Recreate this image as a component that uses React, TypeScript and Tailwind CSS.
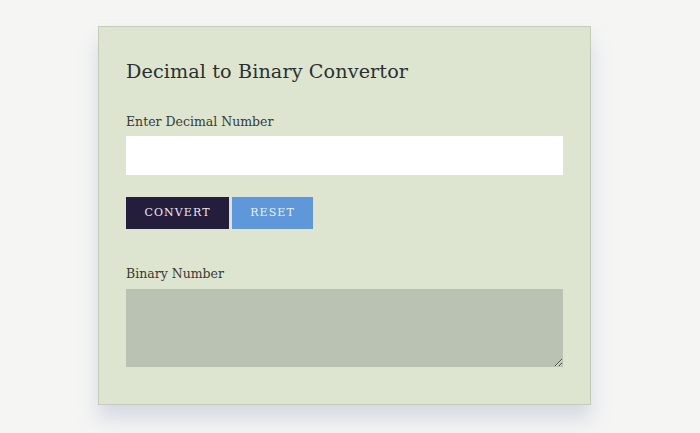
import { useState } from "react";

const serif = { fontFamily: '"DejaVu Serif", "Liberation Serif", serif' };

const App = () => {
  const [decimal, setDecimal] = useState("");
  const [binary, setBinary] = useState("");

  const handleConvert = () => {
    const n = parseInt(decimal, 10);
    setBinary(isNaN(n) ? "" : n.toString(2));
  };

  const handleReset = () => {
    setDecimal("");
    setBinary("");
  };

  return (
    <div className="min-h-[433px] w-full bg-[#f5f5f4] pt-[26px] pl-[98px]" style={serif}>
      <div className="w-[493px] border border-[#c4cbb9] bg-[#dde5d0] px-[27px] pt-[30px] pb-[37px] shadow-[0_14px_18px_rgba(200,206,220,0.7)]">
        <h1 className="text-[19.2px] leading-[30px] text-[#2a302f] tracking-[0.1px]">
          Decimal to Binary Convertor
        </h1>

        <label className="mt-[26px] block text-[12.5px] leading-[18px] text-[#363b36]">
          Enter Decimal Number
        </label>
        <input
          value={decimal}
          onChange={(e) => setDecimal(e.target.value)}
          className="mt-[5px] block h-[39px] w-full bg-white px-3 text-[14px] outline-none"
        />

        <div className="mt-[22px] flex gap-[3px]">
          <button
            onClick={handleConvert}
            className="h-[32px] w-[103px] bg-[#241d3b] pt-px text-[11px] uppercase tracking-[1.1px] text-[#ece9f2]"
          >
            Convert
          </button>
          <button
            onClick={handleReset}
            className="h-[32px] w-[81px] bg-[#5f98da] pt-px text-[11px] uppercase tracking-[1.1px] text-[#e9f0f9]"
          >
            Reset
          </button>
        </div>

        <label className="mt-[36px] block text-[12.5px] leading-[18px] text-[#363b36]">
          Binary Number
        </label>
        <textarea
          value={binary}
          readOnly
          className="mt-[6px] block h-[78px] w-full bg-[#bac2b4] p-2 text-[14px] outline-none"
        />
      </div>
    </div>
  );
};

export default App;
